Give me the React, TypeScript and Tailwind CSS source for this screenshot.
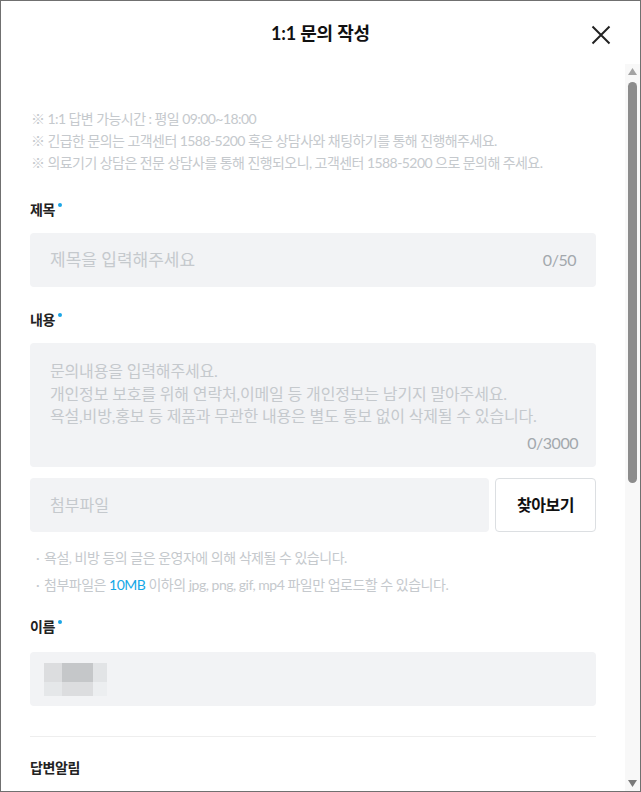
import React from "react";

const FONT = { fontFamily: "Lato, 'Noto Sans CJK KR', sans-serif" };

function Label({ children }: { children: React.ReactNode }) {
  return (
    <div className="flex items-start h-[20px] text-[14px] leading-[20px] font-bold text-[#222] tracking-[-0.03em]">
      <span>{children}</span>
      <span className="ml-[3px] mt-[3px] w-[4px] h-[4px] rounded-full bg-[#1ba5e5]" />
    </div>
  );
}

export default function App() {
  return (
    <div
      style={FONT}
      className="w-[641px] h-[792px] border border-[#707070] bg-white flex flex-col overflow-hidden"
    >
      {/* Header */}
      <div className="h-[63px] shrink-0 relative flex items-center justify-center">
        <h1 className="text-[18px] font-bold text-[#111] tracking-[-0.01em] mt-[2px]">1:1 문의 작성</h1>
        <button className="absolute right-[28px] top-[23px] w-[22px] h-[22px] flex items-center justify-center">
          <svg width="20" height="20" viewBox="0 0 20 20" fill="none">
            <path d="M1.5 1.5 L18.5 18.5 M18.5 1.5 L1.5 18.5" stroke="#222" strokeWidth="2" />
          </svg>
        </button>
      </div>

      {/* Body */}
      <div className="flex flex-1 min-h-0">
        <div className="flex-1 pl-[29px] pr-[29px] pt-[44px] flex flex-col overflow-hidden">
          <div className="text-[14px] leading-[22px] text-[#c5c9cd] tracking-[-0.04em] pl-[1px]">
            <p>※ 1:1 답변 가능시간 : 평일 09:00~18:00</p>
            <p>※ 긴급한 문의는 고객센터 1588-5200 혹은 상담사와 채팅하기를 통해 진행해주세요.</p>
            <p>※ 의료기기 상담은 전문 상담사를 통해 진행되오니, 고객센터 1588-5200 으로 문의해 주세요.</p>
          </div>

          <div className="mt-[26px]">
            <Label>제목</Label>
          </div>
          <div className="mt-[13px] h-[54px] rounded-[4px] bg-[#f2f3f5] flex items-center justify-between pl-[20px] pr-[20px]">
            <span className="text-[#c5c9cd] text-[17px]">제목을 입력해주세요</span>
            <span className="text-[#a3a8ad] text-[16px] tracking-[-0.03em]">0/50</span>
          </div>

          <div className="mt-[23px]">
            <Label>내용</Label>
          </div>
          <div className="mt-[13px] h-[124px] rounded-[4px] bg-[#f2f3f5] pl-[20px] pr-[18px] pt-[17px] flex flex-col text-[16px] tracking-[-0.01em]">
            <div className="text-[#c5c9cd] leading-[22.5px]">
              <p>문의내용을 입력해주세요.</p>
              <p>개인정보 보호를 위해 연락처,이메일 등 개인정보는 남기지 말아주세요.</p>
              <p>욕설,비방,홍보 등 제품과 무관한 내용은 별도 통보 없이 삭제될 수 있습니다.</p>
            </div>
            <div className="text-right text-[#a3a8ad] leading-[22px] mt-[4px] tracking-[-0.03em]">0/3000</div>
          </div>

          <div className="mt-[11px] flex gap-[6px] h-[54px]">
            <div className="flex-1 rounded-[4px] bg-[#f2f3f5] flex items-center pl-[20px] text-[16px] text-[#c5c9cd]">
              첨부파일
            </div>
            <button className="w-[101px] rounded-[4px] border border-[#dcdfe2] bg-white text-[16px] font-bold text-[#111] tracking-[-0.03em]">
              찾아보기
            </button>
          </div>

          <div className="mt-[12px] text-[14px] leading-[27px] text-[#c5c9cd] tracking-[-0.035em]">
            <p className="flex">
              <span className="w-[14px] pl-[6px]">·</span>
              <span>욕설, 비방 등의 글은 운영자에 의해 삭제될 수 있습니다.</span>
            </p>
            <p className="flex">
              <span className="w-[14px] pl-[6px]">·</span>
              <span>
                첨부파일은 <span className="text-[#15a8e6]">10MB</span> 이하의 jpg, png, gif, mp4 파일만 업로드할 수 있습니다.
              </span>
            </p>
          </div>

          <div className="mt-[19px]">
            <Label>이름</Label>
          </div>
          <div className="mt-[15px] h-[54px] rounded-[4px] bg-[#f2f3f5] flex items-center pl-[14px]">
            <div className="grid grid-cols-[18px_31px_14px] grid-rows-[19px_14px]">
              <div className="bg-[#dcdddf]" />
              <div className="bg-[#c5c7c9]" />
              <div className="bg-[#e2e4e6]" />
              <div className="bg-[#e5e7e9]" />
              <div className="bg-[#dcdddf]" />
              <div className="bg-[#eceef0]" />
            </div>
          </div>

          <div className="mt-[30px] h-px bg-[#eeeeee] shrink-0" />

          <div className="mt-[21px] text-[14px] leading-[20px] font-bold text-[#222] tracking-[-0.03em]">
            답변알림
          </div>
        </div>

        {/* Scrollbar */}
        <div className="w-[15px] shrink-0 bg-[#f8f8f8] flex flex-col items-center pt-[4px] pb-[4px]">
          <svg width="9" height="7" viewBox="0 0 9 7" className="shrink-0">
            <path d="M4.5 0 L9 7 L0 7 Z" fill="#a3a3a3" />
          </svg>
          <div className="mt-[7px] w-[9px] h-[401px] rounded-full bg-[#8c8c8c] shrink-0" />
          <div className="flex-1" />
          <svg width="9" height="7" viewBox="0 0 9 7" className="shrink-0">
            <path d="M0 0 L9 0 L4.5 7 Z" fill="#7a7a7a" />
          </svg>
        </div>
      </div>
    </div>
  );
}
